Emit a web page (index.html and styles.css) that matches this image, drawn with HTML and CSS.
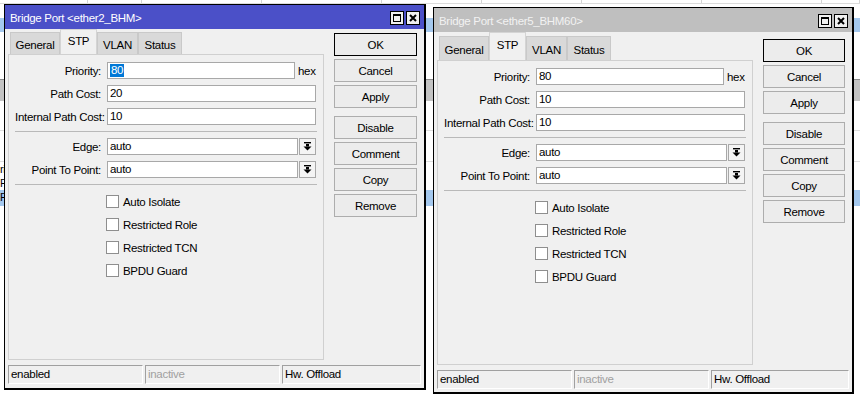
FILE: index.html
```html
<!DOCTYPE html>
<html lang="en">
<head>
    <meta charset="UTF-8">
    <title>Bridge Port</title>
    <link rel="stylesheet" href="styles.css">
</head>
<body>
    <div class="desk">
        <!-- table of the main window, behind the dialogs -->
        <div class="bg-row bg-top">
            <span></span><span></span><span></span><span></span><span></span><span></span><span></span><span></span><span></span>
        </div>
        <div class="bg-row bg-blank1"></div>
        <div class="bg-row bg-sel"></div>
        <div class="bg-row bg-blank2"></div>
        <div class="bg-row bg-head"></div>
        <div class="bg-row bg-line1"></div>
        <div class="bg-row bg-line2"></div>
        <div class="bg-row bg-text">ri</div>
        <div class="bg-row bg-text">F</div>
        <div class="bg-row bg-text bg-sel2">F</div>

        <div class="win win-a">
            <div class="title">
                <span class="title-text">Bridge Port &lt;ether2_BHM&gt;</span>
                <span class="tbtn"><svg width="12" height="12" viewBox="0 0 12 12"><rect x="2.5" y="2.5" width="7" height="7" fill="none" stroke="#000"/><rect x="2" y="2" width="8" height="2" fill="#000"/></svg></span>
                <span class="tbtn"><svg width="12" height="12" viewBox="0 0 12 12"><path d="M3 3 L9 9 M9 3 L3 9" stroke="#000" stroke-width="2"/></svg></span>
            </div>
            <div class="body">
                <div class="main">
                    <div class="tabs">
                        <div class="tab w-general">General</div>
                        <div class="tab on w-stp">STP</div>
                        <div class="tab w-vlan">VLAN</div>
                        <div class="tab w-status">Status</div>
                    </div>
                    <div class="panel">
                        <div class="row">
                            <label>Priority:</label>
                            <div class="field short"><span class="sel">80</span></div>
                            <span class="unit">hex</span>
                        </div>
                        <div class="row">
                            <label>Path Cost:</label>
                            <div class="field">20</div>
                        </div>
                        <div class="row">
                            <label>Internal Path Cost:</label>
                            <div class="field">10</div>
                        </div>
                        <div class="sep"></div>
                        <div class="row">
                            <label>Edge:</label>
                            <div class="field combo">auto</div>
                            <span class="drop"><svg width="9" height="9" viewBox="0 0 9 9"><rect x="1" y="0" width="7" height="1.4" fill="#000"/><rect x="3" y="2" width="3" height="2.5" fill="#000"/><path d="M0.5 4.5 H8.5 L4.5 8.5 Z" fill="#000"/></svg></span>
                        </div>
                        <div class="row">
                            <label>Point To Point:</label>
                            <div class="field combo">auto</div>
                            <span class="drop"><svg width="9" height="9" viewBox="0 0 9 9"><rect x="1" y="0" width="7" height="1.4" fill="#000"/><rect x="3" y="2" width="3" height="2.5" fill="#000"/><path d="M0.5 4.5 H8.5 L4.5 8.5 Z" fill="#000"/></svg></span>
                        </div>
                        <div class="sep"></div>
                        <div class="checks">
                            <div class="check"><span class="box"></span>Auto Isolate</div>
                            <div class="check"><span class="box"></span>Restricted Role</div>
                            <div class="check"><span class="box"></span>Restricted TCN</div>
                            <div class="check"><span class="box"></span>BPDU Guard</div>
                        </div>
                    </div>
                </div>
                <div class="buttons">
                    <div class="btn default">OK</div>
                    <div class="btn">Cancel</div>
                    <div class="btn">Apply</div>
                    <div class="btn spaced">Disable</div>
                    <div class="btn">Comment</div>
                    <div class="btn">Copy</div>
                    <div class="btn">Remove</div>
                </div>
            </div>
            <div class="status">
                <div class="cell c1">enabled</div>
                <div class="cell c2 dim">inactive</div>
                <div class="cell c3">Hw. Offload</div>
            </div>
        </div>

        <div class="win win-b">
            <div class="title">
                <span class="title-text">Bridge Port &lt;ether5_BHM60&gt;</span>
                <span class="tbtn"><svg width="12" height="12" viewBox="0 0 12 12"><rect x="2.5" y="2.5" width="7" height="7" fill="none" stroke="#000"/><rect x="2" y="2" width="8" height="2" fill="#000"/></svg></span>
                <span class="tbtn"><svg width="12" height="12" viewBox="0 0 12 12"><path d="M3 3 L9 9 M9 3 L3 9" stroke="#000" stroke-width="2"/></svg></span>
            </div>
            <div class="body">
                <div class="main">
                    <div class="tabs">
                        <div class="tab w-general">General</div>
                        <div class="tab on w-stp">STP</div>
                        <div class="tab w-vlan">VLAN</div>
                        <div class="tab w-status">Status</div>
                    </div>
                    <div class="panel">
                        <div class="row">
                            <label>Priority:</label>
                            <div class="field short">80</div>
                            <span class="unit">hex</span>
                        </div>
                        <div class="row">
                            <label>Path Cost:</label>
                            <div class="field">10</div>
                        </div>
                        <div class="row">
                            <label>Internal Path Cost:</label>
                            <div class="field">10</div>
                        </div>
                        <div class="sep"></div>
                        <div class="row">
                            <label>Edge:</label>
                            <div class="field combo">auto</div>
                            <span class="drop"><svg width="9" height="9" viewBox="0 0 9 9"><rect x="1" y="0" width="7" height="1.4" fill="#000"/><rect x="3" y="2" width="3" height="2.5" fill="#000"/><path d="M0.5 4.5 H8.5 L4.5 8.5 Z" fill="#000"/></svg></span>
                        </div>
                        <div class="row">
                            <label>Point To Point:</label>
                            <div class="field combo">auto</div>
                            <span class="drop"><svg width="9" height="9" viewBox="0 0 9 9"><rect x="1" y="0" width="7" height="1.4" fill="#000"/><rect x="3" y="2" width="3" height="2.5" fill="#000"/><path d="M0.5 4.5 H8.5 L4.5 8.5 Z" fill="#000"/></svg></span>
                        </div>
                        <div class="sep"></div>
                        <div class="checks">
                            <div class="check"><span class="box"></span>Auto Isolate</div>
                            <div class="check"><span class="box"></span>Restricted Role</div>
                            <div class="check"><span class="box"></span>Restricted TCN</div>
                            <div class="check"><span class="box"></span>BPDU Guard</div>
                        </div>
                    </div>
                </div>
                <div class="buttons">
                    <div class="btn default">OK</div>
                    <div class="btn">Cancel</div>
                    <div class="btn">Apply</div>
                    <div class="btn spaced">Disable</div>
                    <div class="btn">Comment</div>
                    <div class="btn">Copy</div>
                    <div class="btn">Remove</div>
                </div>
            </div>
            <div class="status">
                <div class="cell c1">enabled</div>
                <div class="cell c2 dim">inactive</div>
                <div class="cell c3">Hw. Offload</div>
            </div>
        </div>
    </div>
</body>
</html>
```

FILE: styles.css
```css
* {
    margin: 0;
    padding: 0;
    box-sizing: border-box;
}

body {
    background: #fff;
    font-family: "Liberation Sans", Arial, sans-serif;
    font-size: 11px;
    letter-spacing: -0.3px;
    color: #000;
}

.desk {
    position: relative;
    width: 860px;
    height: 396px;
    overflow: hidden;
    background: #fff;
}

/* background table */
.bg-row {
    width: 100%;
}

.bg-top {
    height: 4px;
    display: grid;
    grid-template-columns: 88px 54px 120px 120px 100px 100px 120px 120px 38px;
    border-bottom: 1px solid #dcdcdc;
}

.bg-top span {
    border-right: 1px solid #d4d4d4;
}

.bg-blank1 {
    height: 14px;
}

.bg-sel {
    height: 14px;
    background: #a4c8ee;
}

.bg-blank2 {
    height: 47px;
}

.bg-head {
    height: 22px;
    background: #c3c3c3;
    border-top: 1px solid #8c8c8c;
}

.bg-line1 {
    height: 30px;
    border-bottom: 1px solid #dedede;
}

.bg-line2 {
    height: 31px;
    border-bottom: 1px solid #dedede;
}

.bg-text {
    height: 14px;
    line-height: 14px;
    font-size: 11px;
}

.bg-sel2 {
    height: 16px;
    background: #a4c8ee;
}

/* dialog windows */
.win {
    position: absolute;
    width: 422px;
    height: 386px;
    background: #f0f0f0;
    border: 1px solid #000;
    border-right-width: 2px;
    border-bottom-width: 2px;
    display: flex;
    flex-direction: column;
}

.win-a {
    left: 4px;
    top: 4px;
}

.win-b {
    left: 433px;
    top: 7px;
    width: 421px;
    height: 387px;
}

.title {
    height: 24px;
    background: #4b50c8;
    color: #fff;
    display: flex;
    align-items: center;
    padding: 0 4px 0 5px;
    font-size: 11.5px;
}

.win-b .title {
    background: #bfbfbf;
    color: #f2f2f2;
}

.title-text {
    flex: 1;
    padding-top: 1px;
}

.tbtn {
    width: 14px;
    height: 14px;
    margin-left: 2px;
    margin-top: 2px;
    border: 1px solid #000;
    background: #f0f0f0;
    display: flex;
    align-items: center;
    justify-content: center;
}

.body {
    display: flex;
    height: 331px;
    padding-left: 3px;
}

.win-b .body {
    height: 333px;
}

.main {
    width: 316px;
    display: flex;
    flex-direction: column;
}

.tabs {
    display: flex;
    align-items: flex-end;
    height: 25px;
    padding-left: 2px;
}

.win-b .tabs {
    height: 28px;
}

.tab {
    height: 22px;
    background: #d9d9d9;
    border: 1px solid #c9c9c9;
    border-bottom: none;
    display: flex;
    align-items: center;
    justify-content: center;
    font-size: 11.5px;
    padding-top: 2px;
}

.win-b .tab {
    height: 24px;
}

.tab.on {
    height: 25px;
    background: #f0f0f0;
    border-color: #d4d4d4;
    padding-top: 0;
    padding-bottom: 3px;
}

.win-b .tab.on {
    height: 28px;
}

.w-general { width: 50px; }
.w-stp { width: 37px; }
.w-vlan { width: 41px; }
.w-status { width: 44px; }

.panel {
    flex: 1;
    border: 1px solid #d0d0d0;
    padding: 7px 6px 0 6px;
}

.row {
    display: flex;
    align-items: center;
    height: 17px;
    margin-bottom: 6px;
}

.row label {
    width: 86px;
    text-align: right;
    margin-right: 6px;
    white-space: nowrap;
    font-size: 11.5px;
}

.field {
    width: 209px;
    height: 17px;
    background: #fff;
    border: 1px solid #a8a8a8;
    padding-left: 2px;
    line-height: 15px;
    font-size: 11.5px;
}

.field.short {
    width: 188px;
}

.field.combo {
    width: 191px;
}

.sel {
    background: #0078d7;
    color: #fff;
    display: inline-block;
    padding: 0 1px;
    line-height: 13px;
}

.unit {
    margin-left: 3px;
    font-size: 11.5px;
}

.drop {
    width: 17px;
    height: 17px;
    margin-left: 1px;
    border: 1px solid #a8a8a8;
    background: #f4f4f4;
    display: flex;
    align-items: center;
    justify-content: center;
}

.sep {
    height: 1px;
    background: #b9b9b9;
    margin: 3px 0 6px 0;
}

.checks {
    padding: 4px 0 0 91px;
}

.check {
    display: flex;
    align-items: center;
    height: 13px;
    margin-bottom: 10px;
    font-size: 11.5px;
}

.box {
    width: 13px;
    height: 13px;
    border: 1px solid #8e8e8e;
    background: #fff;
    margin-right: 4px;
}

.buttons {
    width: 83px;
    margin-left: 10px;
    padding-top: 4px;
    display: flex;
    flex-direction: column;
    gap: 3px;
}

.win-b .buttons {
    width: 82px;
    padding-top: 7px;
}

.btn {
    height: 23px;
    border: 1px solid #adadad;
    background: #ececec;
    display: flex;
    align-items: center;
    justify-content: center;
    font-size: 11.5px;
}

.btn.default {
    border-color: #000;
}

.btn.spaced {
    margin-top: 5px;
}

.status {
    display: flex;
    gap: 2px;
    margin: 5px 3px 0 3px;
    height: 19px;
}

.cell {
    border-top: 1px solid #a0a0a0;
    border-left: 1px solid #a0a0a0;
    border-right: 1px solid #fff;
    border-bottom: 1px solid #fff;
    padding-left: 2px;
    line-height: 17px;
    font-size: 11.5px;
}

.c1 { width: 135px; }
.c2 { width: 135px; }
.c3 { flex: 1; }

.dim {
    color: #a0a0a0;
}
```
